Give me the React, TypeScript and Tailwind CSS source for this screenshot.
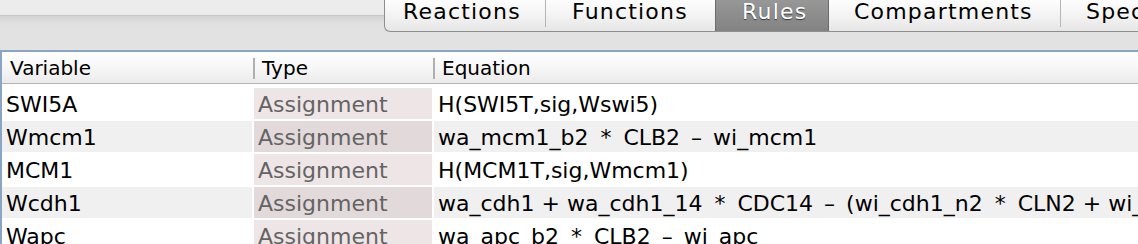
import React from 'react';

type Rule = { variable: string; type: string; equation: string };

const rules: Rule[] = [
  { variable: 'SWI5A', type: 'Assignment', equation: 'H(SWI5T,sig,Wswi5)' },
  { variable: 'Wmcm1', type: 'Assignment', equation: 'wa_mcm1_b2 * CLB2 - wi_mcm1' },
  { variable: 'MCM1', type: 'Assignment', equation: 'H(MCM1T,sig,Wmcm1)' },
  {
    variable: 'Wcdh1',
    type: 'Assignment',
    equation: 'wa_cdh1 + wa_cdh1_14 * CDC14 - (wi_cdh1_n2 * CLN2 + wi_cdh1_b5 * CLB5 + wi_cdh1_b2 * CLB2)',
  },
  { variable: 'Wapc', type: 'Assignment', equation: 'wa_apc_b2 * CLB2 - wi_apc' },
];

// operators get a bit more room, like the original table font
function Equation({ text }: { text: string }) {
  const parts = text.split(' ');
  return (
    <>
      {parts.map((p, i) => {
        const sp = i < parts.length - 1 ? ' ' : '';
        if (p === '*') return <span key={i} className="mx-[5px]">*{sp}</span>;
        if (p === '-') return <span key={i} className="mx-[4px]">–{sp}</span>;
        return <span key={i}>{p}{sp}</span>;
      })}
    </>
  );
}

function Tabs() {
  return (
    <div className="flex h-[32px]">
      {/* window background left of the tab strip */}
      <div className="w-[384px] shrink-0 flex flex-col">
        <div className="h-[15px] bg-[#ececec]" />
        <div className="h-px bg-[#c6c6c6]" />
        <div className="flex-1 bg-gradient-to-b from-[#d3d3d3] via-[#e1e1e1] to-[#e2e2e2]" />
      </div>

      {/* tab strip */}
      <div className="flex flex-1 min-w-0 items-start overflow-hidden rounded-bl-[6px] border-l border-b border-[#8e8e8e] bg-gradient-to-b from-[#fdfdfd] via-[#f3f3f3] to-[#e6e6e6] text-[22px] leading-[22px] tracking-[1.2px] text-black whitespace-nowrap">
        <div className="w-[160px] shrink-0 h-full pl-[18px] pt-px">Reactions</div>
        <div className="w-px shrink-0 h-[27px] bg-[#b5b5b5]" />
        <div className="w-[169px] shrink-0 h-full pl-[26px] pt-px">Functions</div>
        <div className="w-[114px] shrink-0 h-full pl-[26px] pt-px border-x border-[#6c6c6c] bg-gradient-to-b from-[#979797] to-[#838383] text-white [text-shadow:0_1px_1px_rgba(0,0,0,0.6)]">
          Rules
        </div>
        <div className="w-[231px] shrink-0 h-full pl-[25px] pt-px">Compartments</div>
        <div className="w-px shrink-0 h-[27px] bg-[#b5b5b5]" />
        <div className="shrink-0 h-full pl-[25px] pt-px">Species</div>
      </div>
    </div>
  );
}

function Header() {
  return (
    <div className="flex h-[32px] border-b border-[#b4b4b4] bg-gradient-to-b from-white via-[#f7f7f7] to-[#ebebeb] text-[20px] leading-[20px] text-black">
      <div className="w-[251px] shrink-0 pl-[8px] pt-[6px]">Variable</div>
      <div className="w-[2px] shrink-0 h-[21px] mt-[6px] bg-[#b0b0b0]" />
      <div className="w-[178px] shrink-0 pl-[7px] pt-[6px]">Type</div>
      <div className="w-[2px] shrink-0 h-[21px] mt-[6px] bg-[#b0b0b0]" />
      <div className="flex-1 pl-[7px] pt-[6px]">Equation</div>
    </div>
  );
}

function Row({ rule, odd }: { rule: Rule; odd: boolean }) {
  const base = odd ? 'bg-[#f0f0f0]' : 'bg-white';
  const typeBg = odd ? 'bg-[#e2d9da]' : 'bg-[#eee5e6]';
  return (
    <div className="flex gap-[2px] h-[31px] mb-[2px] text-[22px] leading-[28px] whitespace-nowrap">
      <div className={`w-[250px] shrink-0 pl-[4px] pt-[3px] text-black ${base}`}>{rule.variable}</div>
      <div className={`w-[178px] shrink-0 pl-[4px] pt-[3px] text-[#646464] ${typeBg}`}>{rule.type}</div>
      <div className={`flex-1 min-w-0 pl-[4px] pt-[3px] text-black overflow-hidden ${base}`}>
        <Equation text={rule.equation} />
      </div>
    </div>
  );
}

export default function App() {
  return (
    <div className="w-[1138px] h-[244px] overflow-hidden bg-[#e2e2e2] font-['DejaVu_Sans',sans-serif]">
      <Tabs />
      <div className="h-[18px]" />
      <div className="bg-white border-t-2 border-l-2 border-[#8aa4c4]">
        <Header />
        <div className="pt-[4px]">
          {rules.map((r, i) => (
            <Row key={r.variable} rule={r} odd={i % 2 === 1} />
          ))}
        </div>
      </div>
    </div>
  );
}
